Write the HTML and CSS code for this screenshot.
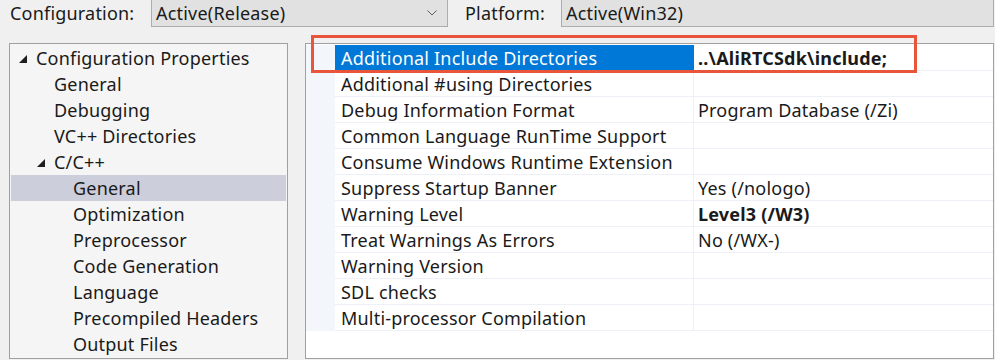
FILE: index.html
```html
<!DOCTYPE html>
<html lang="en">
<head>
  <meta charset="UTF-8" />
  <title>Property Pages</title>
  <link rel="stylesheet" href="styles.css">
</head>
<body>

  <div class="toolbar">
    <div class="label config-label">Configuration:</div>
    <div class="combo config-combo">
      <span>Active(Release)</span>
      <svg class="chevron" width="10" height="6" viewBox="0 0 10 6"><path d="M0.5 0.5 L5 5 L9.5 0.5" fill="none" stroke="#606060" stroke-width="1"/></svg>
    </div>
    <div class="label platform-label">Platform:</div>
    <div class="combo platform-combo">
      <span>Active(Win32)</span>
    </div>
  </div>

  <div class="main">
    <div class="tree">
      <div class="node lvl0"><span class="arrow"></span>Configuration Properties</div>
      <div class="node lvl1">General</div>
      <div class="node lvl1">Debugging</div>
      <div class="node lvl1">VC++ Directories</div>
      <div class="node lvl1 open"><span class="arrow"></span>C/C++</div>
      <div class="node lvl2 selected">General</div>
      <div class="node lvl2">Optimization</div>
      <div class="node lvl2">Preprocessor</div>
      <div class="node lvl2">Code Generation</div>
      <div class="node lvl2">Language</div>
      <div class="node lvl2">Precompiled Headers</div>
      <div class="node lvl2">Output Files</div>
    </div>

    <div class="grid">
      <div class="row active">
        <div class="name">Additional Include Directories</div>
        <div class="value bold">..\AliRTCSdk\include;</div>
      </div>
      <div class="row">
        <div class="name">Additional #using Directories</div>
        <div class="value"></div>
      </div>
      <div class="row">
        <div class="name">Debug Information Format</div>
        <div class="value">Program Database (/Zi)</div>
      </div>
      <div class="row">
        <div class="name">Common Language RunTime Support</div>
        <div class="value"></div>
      </div>
      <div class="row">
        <div class="name">Consume Windows Runtime Extension</div>
        <div class="value"></div>
      </div>
      <div class="row">
        <div class="name">Suppress Startup Banner</div>
        <div class="value">Yes (/nologo)</div>
      </div>
      <div class="row">
        <div class="name">Warning Level</div>
        <div class="value bold">Level3 (/W3)</div>
      </div>
      <div class="row">
        <div class="name">Treat Warnings As Errors</div>
        <div class="value">No (/WX-)</div>
      </div>
      <div class="row">
        <div class="name">Warning Version</div>
        <div class="value"></div>
      </div>
      <div class="row">
        <div class="name">SDL checks</div>
        <div class="value"></div>
      </div>
      <div class="row">
        <div class="name">Multi-processor Compilation</div>
        <div class="value"></div>
      </div>
    </div>
  </div>

  <div class="highlight"></div>

</body>
</html>
```

FILE: styles.css
```css
* { margin: 0; padding: 0; box-sizing: border-box; }
body {
  font-family: 'Noto Sans', sans-serif;
  font-size: 18px;
  letter-spacing: 0.2px;
  color: #1a1a1a;
  background: #f0f0f0;
  width: 995px;
  height: 360px;
  overflow: hidden;
  position: relative;
}
.toolbar {
  display: flex;
  align-items: center;
  height: 27px;
}
.label {
  line-height: 25px;
}
.config-label { padding-left: 10px; width: 151px; }
.platform-label { margin-left: 17px; width: 96px; }
.combo {
  height: 28px;
  margin-top: -1px;
  align-self: flex-start;
  background: #e1e1e1;
  border: 1px solid #adadad;
  display: flex;
  align-items: center;
  padding-left: 4px;
  line-height: 25px;
}
.config-combo { width: 297px; position: relative; }
.platform-combo { width: 433px; }
.chevron {
  position: absolute;
  right: 10px;
  top: 10px;
}
.main {
  display: flex;
  margin-top: 16px;
  height: 317px;
}
.tree {
  margin-left: 9px;
  width: 279px;
  height: 316px;
  background: #f5f5f5;
  border: 1px solid #a0a0a0;
  padding: 1px;
}
.node {
  height: 26px;
  line-height: 26px;
  white-space: nowrap;
  display: flex;
  align-items: center;
}
.lvl0 { padding-left: 8px; }
.lvl1 { padding-left: 43px; }
.lvl1.open { padding-left: 26px; }
.lvl2 { padding-left: 62px; }
.selected { background: #cccedb; }
.arrow {
  width: 0;
  height: 0;
  border-left: 8px solid transparent;
  border-bottom: 8px solid #1e1e1e;
  margin-right: 9px;
  margin-top: 2px;
}
.grid {
  margin-left: 17px;
  width: 689px;
  height: 316px;
  background: #fff;
  border: 1px solid #a0a0a0;
  padding-top: 1px;
}
.row {
  display: flex;
  height: 26px;
  padding-left: 29px;
  background: #f3f6fb;
}
.name, .value {
  height: 26px;
  line-height: 27px;
  border-bottom: 1px solid #eef0f8;
  background: #fff;
  white-space: nowrap;
  overflow: hidden;
}
.name {
  width: 359px;
  padding-left: 6px;
  border-right: 1px solid #eef0f8;
}
.value {
  flex: 1;
  padding-left: 4px;
}
.row.active .name {
  background: #0078d7;
  color: #fff;
  border-right-color: #0078d7;
}
.bold { font-weight: 700; }
.highlight {
  position: absolute;
  left: 311px;
  top: 35px;
  width: 606px;
  height: 38px;
  border: 3px solid #e9553b;
}
```
